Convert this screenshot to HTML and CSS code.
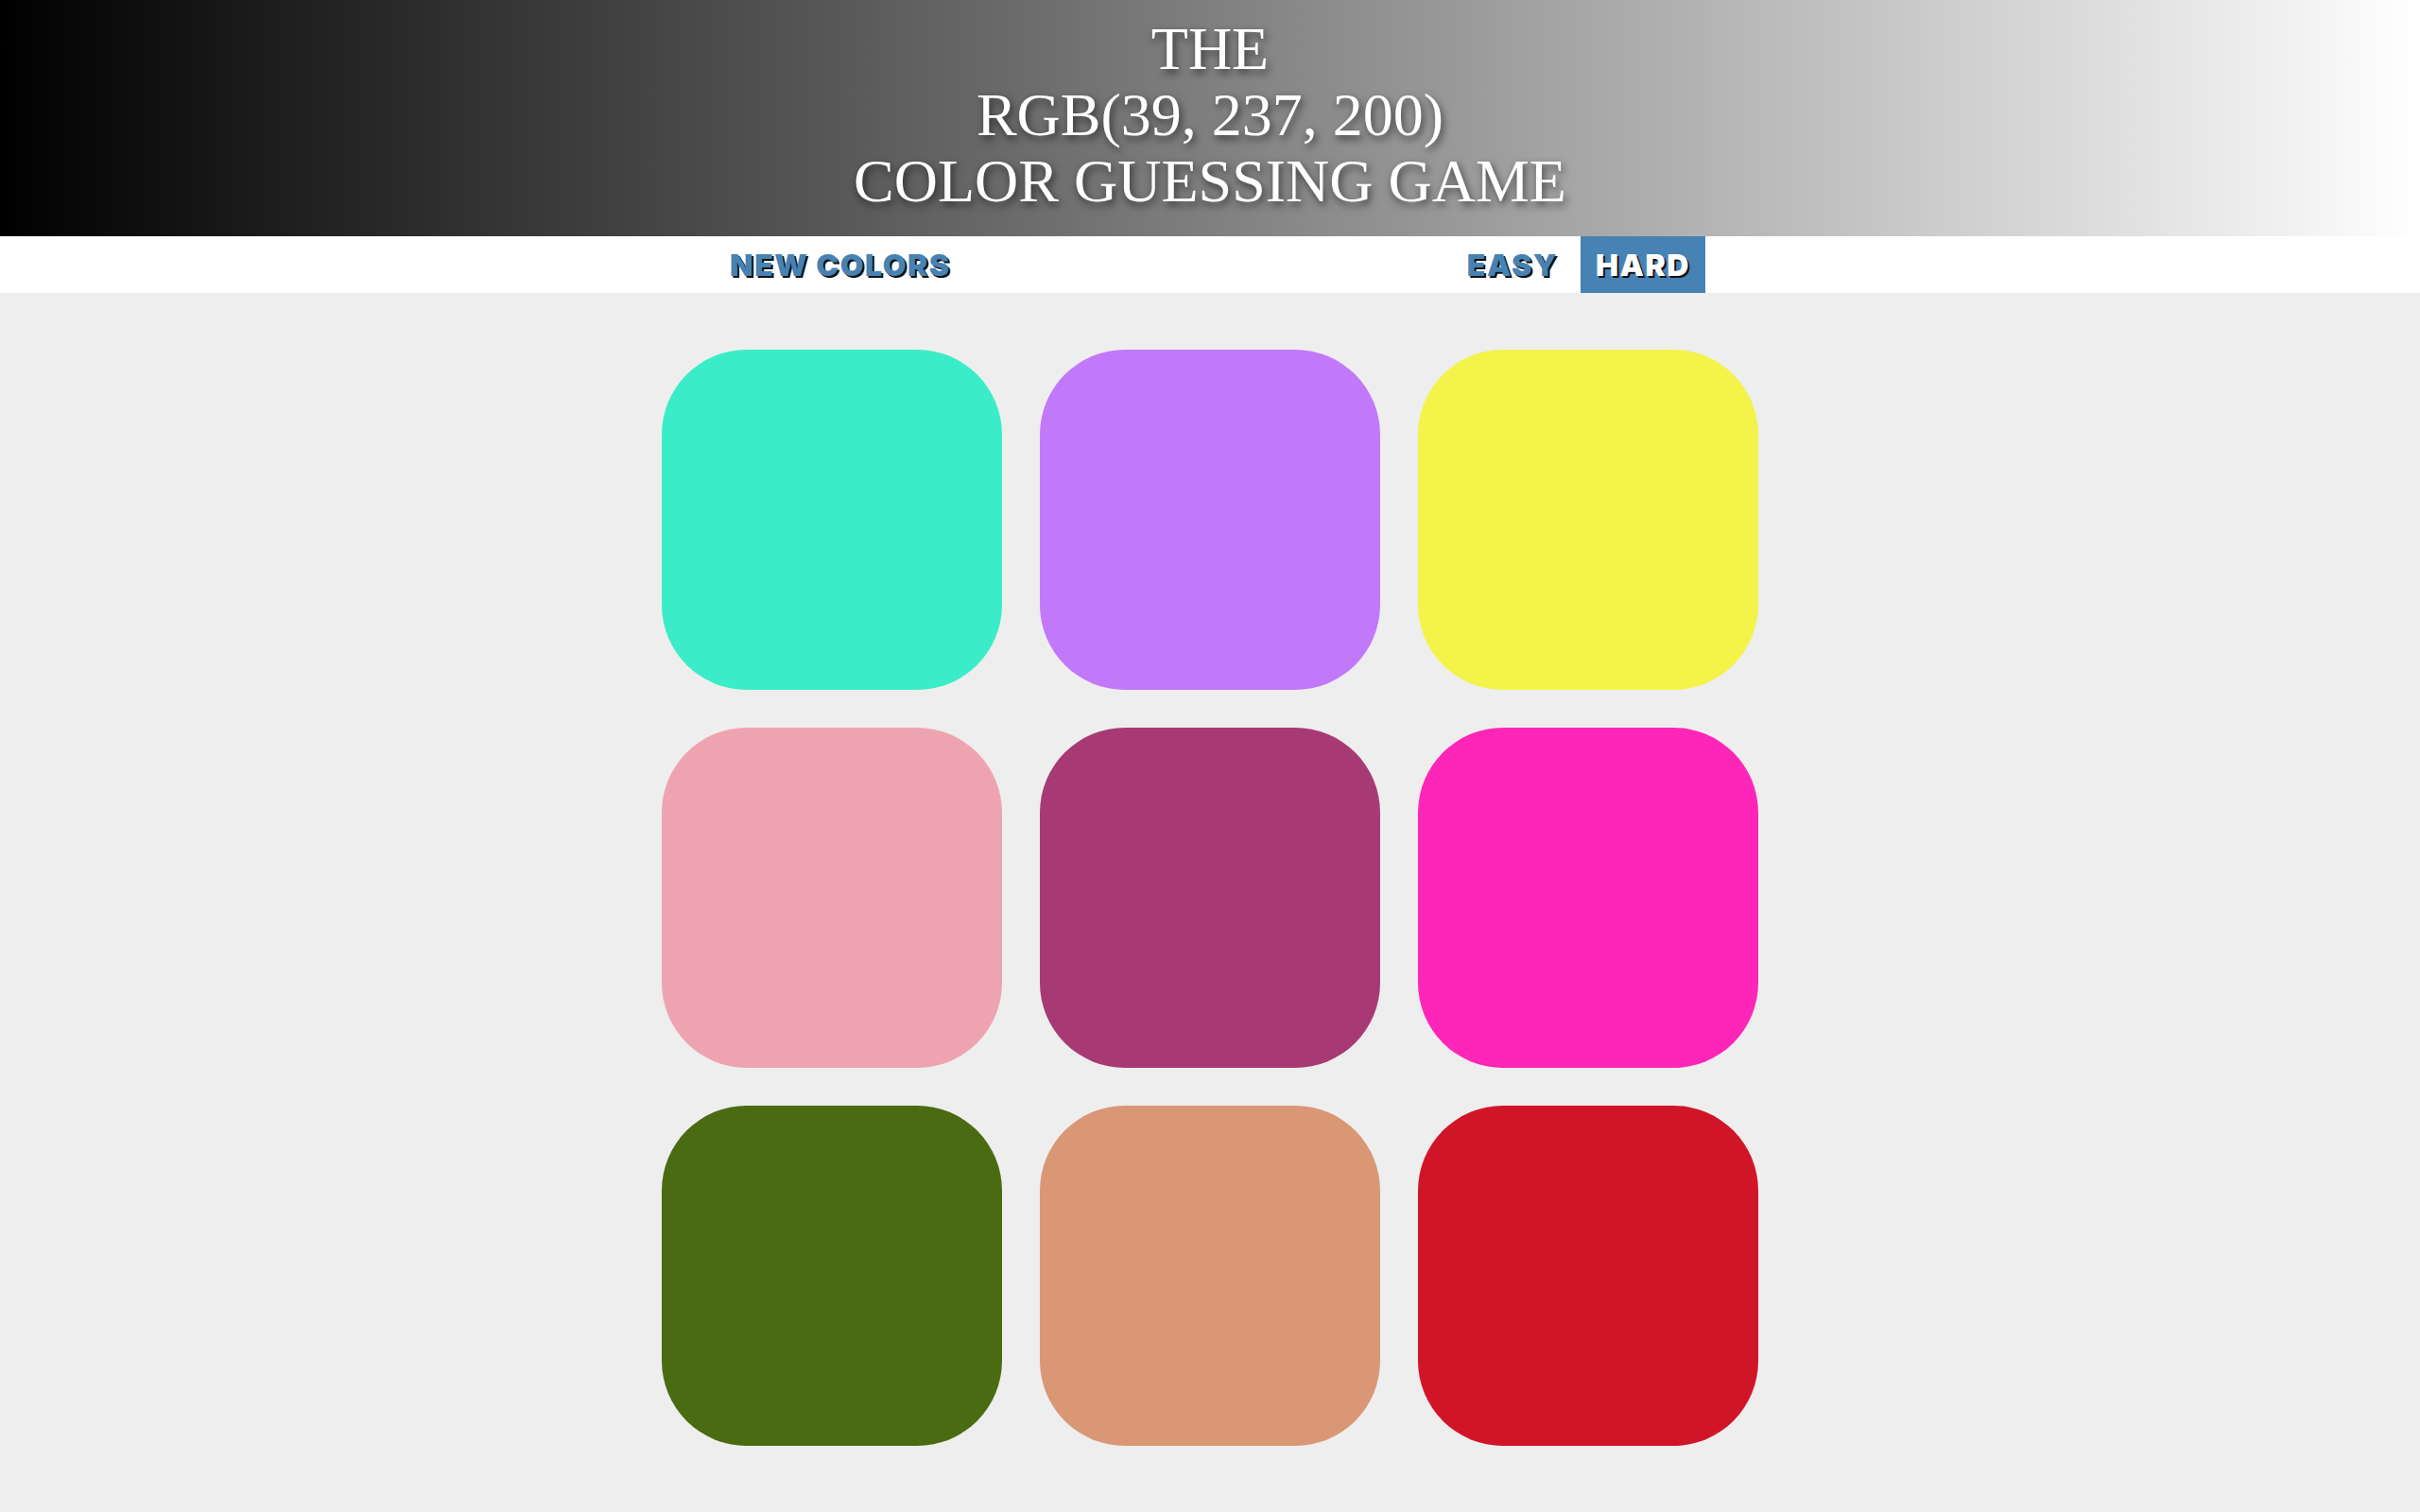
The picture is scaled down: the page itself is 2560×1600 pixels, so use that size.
FILE: index.html
```html
<!DOCTYPE html>
<html lang="en">
<head>
<meta charset="utf-8">
<title>Color Guessing Game</title>
<link rel="stylesheet" href="styles.css">
</head>
<body>
  <header class="banner">
    <h1 class="title">The<br><span class="rgb">RGB(39, 237, 200)</span><br>Color Guessing Game</h1>
  </header>
  <nav class="bar">
    <div class="bar-inner">
      <button class="btn">New Colors</button>
      <span class="message"></span>
      <div class="modes">
        <button class="btn">Easy</button>
        <button class="btn selected">Hard</button>
      </div>
    </div>
  </nav>
  <main class="board">
    <div class="square c1"></div>
    <div class="square c2"></div>
    <div class="square c3"></div>
    <div class="square c4"></div>
    <div class="square c5"></div>
    <div class="square c6"></div>
    <div class="square c7"></div>
    <div class="square c8"></div>
    <div class="square c9"></div>
  </main>
</body>
</html>
```
FILE: styles.css
```css
html, body {
  margin: 0;
  padding: 0;
}
body {
  background: #eeeeee;
  font-family: "Liberation Serif", serif;
  min-height: 1600px;
}
.banner {
  height: 250px;
  box-sizing: border-box;
  padding-top: 17px;
  background: linear-gradient(to right, #000000, #ffffff);
}
.title {
  margin: 0;
  color: #ffffff;
  text-align: center;
  text-transform: uppercase;
  font-family: "Liberation Serif", "DejaVu Serif", serif;
  font-weight: normal;
  font-size: 64px;
  line-height: 70px;
  text-shadow: 2px 4px 8px rgba(0, 0, 0, 0.6);
}
.bar {
  height: 60px;
  background: #ffffff;
}
.bar-inner {
  width: 1048px;
  height: 60px;
  margin: 0 auto;
  display: flex;
  justify-content: space-between;
  align-items: stretch;
}
.modes {
  display: flex;
  gap: 8px;
}
.btn {
  border: none;
  margin: 0;
  background: none;
  padding: 0 16px;
  height: 60px;
  color: #4682b4;
  font-family: Inter, Roboto, "Liberation Sans", sans-serif;
  font-weight: 900;
  font-size: 32px;
  letter-spacing: 1.5px;
  text-transform: uppercase;
  text-shadow: 2px 2px 0 #111111;
  cursor: pointer;
}
.btn.selected {
  background: #4682b4;
  color: #ffffff;
}
.board {
  width: 1160px;
  margin: 60px auto 0;
  display: grid;
  grid-template-columns: repeat(3, 360px);
  grid-auto-rows: 360px;
  gap: 40px;
}
.square {
  border-radius: 25%;
}
.c1 { background: rgb(58, 237, 200); }
.c2 { background: rgb(194, 121, 249); }
.c3 { background: rgb(243, 243, 74); }
.c4 { background: rgb(238, 164, 176); }
.c5 { background: rgb(167, 58, 117); }
.c6 { background: rgb(254, 38, 185); }
.c7 { background: rgb(75, 107, 18); }
.c8 { background: rgb(218, 151, 117); }
.c9 { background: rgb(209, 21, 41); }
```
